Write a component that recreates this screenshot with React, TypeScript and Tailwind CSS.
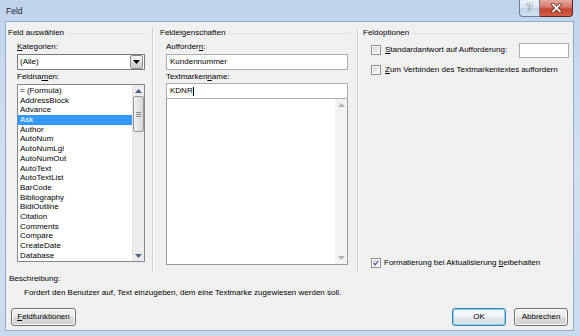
import React from 'react';

const fieldNames = [
  '= (Formula)', 'AddressBlock', 'Advance', 'Ask', 'Author', 'AutoNum', 'AutoNumLgl', 'AutoNumOut',
  'AutoText', 'AutoTextList', 'BarCode', 'Bibliography', 'BidiOutline', 'Citation', 'Comments',
  'Compare', 'CreateDate', 'Database',
];

const Arrow: React.FC<{ up?: boolean; color?: string }> = ({ up, color = '#4d6185' }) => (
  <svg width="7" height="4" viewBox="0 0 7 4">
    <path d={up ? 'M0 4 L3.5 0 L7 4 Z' : 'M0 0 L7 0 L3.5 4 Z'} fill={color} />
  </svg>
);

const Check: React.FC<{ checked?: boolean }> = ({ checked }) => (
  <div className="w-[10px] h-[10px] border border-[#8e8f8f] bg-white p-[1px] shrink-0">
    <div className="w-full h-full bg-gradient-to-br from-[#cfd2d8] to-[#f7f7f7] flex items-center justify-center">
      {checked && (
        <svg width="8" height="8" viewBox="0 0 8 8">
          <path d="M1 4.2 L3 6.5 L7 1" fill="none" stroke="#3a57a4" strokeWidth="1.6" />
        </svg>
      )}
    </div>
  </div>
);

const Button: React.FC<{ children: React.ReactNode; focused?: boolean; width: string }> = ({ children, focused, width }) => (
  <div
    className={`${width} h-[18px] rounded-[3px] border flex items-center justify-center ${
      focused
        ? 'border-[#3c7fb1] shadow-[inset_0_0_0_1px_#7fd3f7] bg-[linear-gradient(to_bottom,#f6f9fb_0%,#eef3f6_50%,#e2e8ec_51%,#d8dfe4_100%)]'
        : 'border-[#707070] shadow-[inset_0_0_0_1px_#fbfbfb] bg-[linear-gradient(to_bottom,#f2f2f2_0%,#ebebeb_50%,#dddddd_51%,#cfcfcf_100%)]'
    }`}
  >
    {children}
  </div>
);

const Heading: React.FC<{ children: React.ReactNode }> = ({ children }) => (
  <div className="flex items-center h-[10px] leading-[10px] gap-[3px]">
    <span>{children}</span>
    <div className="flex-1 h-px bg-[#dcdfe3]" />
  </div>
);

const Separator = () => (
  <div className="flex shrink-0 pt-[5px]">
    <div className="w-px bg-[#cdcdcd]" />
    <div className="w-px bg-white" />
  </div>
);

export default function App() {
  return (
    <div className="w-[580px] h-[336px] flex flex-col overflow-hidden bg-gradient-to-b from-[#bfd4ec] via-[#d2e1f2] to-[#c9dbef] font-['Liberation_Sans',Arial,sans-serif] text-[8px] text-black">
      {/* Title bar */}
      <div className="h-[21px] flex items-start shrink-0">
        <span className="ml-[6px] mt-[5px] text-[8.5px] leading-[12px] text-[#1e2a3a]">Feld</span>
        <div className="flex-1" />
        <div className="flex mr-[7px]">
          <div className="w-[21px] h-[17px] rounded-bl-[4px] border border-t-0 border-[#6d7f99] bg-[linear-gradient(to_bottom,#eef3fa_0%,#d9e4f1_50%,#c3d3e7_51%,#d2e0f0_100%)] flex items-center justify-center">
            <span className="text-white font-bold text-[10px] leading-[10px] [text-shadow:0_0_1px_#2e4466,0_0_1px_#2e4466]">?</span>
          </div>
          <div className="w-[33px] h-[17px] rounded-br-[4px] border border-l-0 border-t-0 border-[#5b2620] bg-[linear-gradient(to_bottom,#e9a99f_0%,#d97766_45%,#c8442f_55%,#d55f45_100%)] flex items-center justify-center">
            <svg width="11" height="10" viewBox="0 0 11 10">
              <path d="M2 1.5 L9 8.5 M9 1.5 L2 8.5" stroke="#4a1a14" strokeWidth="3.2" strokeLinecap="square" />
              <path d="M2 1.5 L9 8.5 M9 1.5 L2 8.5" stroke="#ffffff" strokeWidth="1.8" strokeLinecap="square" />
            </svg>
          </div>
        </div>
      </div>

      {/* Client area */}
      <div className="ml-[5px] mr-[6px] mb-[5px] flex-1 bg-[#f0f0f0] border border-[#97abc4] flex flex-col">
        <div className="h-[250px] flex">
          {/* Feld auswählen */}
          <div className="w-[146px] pl-[2px] pr-[6px] pt-[6px] flex flex-col">
            <Heading>Feld auswählen</Heading>
            <div className="pl-[9px] flex flex-col">
              <div className="mt-[4px] h-[10px] leading-[10px]"><u className="underline-offset-1">K</u>ategorien:</div>
              <div className="mt-[2px] w-[128px] h-[16px] border border-[#7a7a7a] bg-white flex items-center">
                <span className="pl-[2px] flex-1">(Alle)</span>
                <div className="w-[13px] h-[14px] mr-px border border-[#8a8a8a] rounded-[2px] bg-[linear-gradient(to_bottom,#f4f4f4_0%,#e6e6e6_50%,#d8d8d8_51%,#cdcdcd_100%)] flex items-center justify-center">
                  <Arrow color="#000" />
                </div>
              </div>
              <div className="mt-[2px] h-[10px] leading-[10px]">Feldna<u className="underline-offset-1">m</u>en:</div>
              <div className="mt-[2px] w-[128px] h-[178px] border border-[#828790] bg-white flex">
                <div className="flex-1 pt-px">
                  {fieldNames.map((n) => (
                    <div
                      key={n}
                      className={`h-[9.7px] leading-[9.7px] pl-[2px] ${n === 'Ask' ? 'bg-[#3399ff] text-white' : ''}`}
                    >
                      {n}
                    </div>
                  ))}
                </div>
                <div className="w-[12px] bg-[#ececec] border-l border-[#e3e3e3] flex flex-col items-center">
                  <div className="h-[11px] flex items-center"><Arrow up /></div>
                  <div className="w-[11px] h-[36px] rounded-[2px] border border-[#979797] bg-gradient-to-r from-[#f1f1f1] to-[#d6d6d6] flex flex-col items-center justify-center gap-px">
                    <div className="w-[5px] h-px bg-[#8a8a8a]" />
                    <div className="w-[5px] h-px bg-[#8a8a8a]" />
                    <div className="w-[5px] h-px bg-[#8a8a8a]" />
                  </div>
                  <div className="flex-1" />
                  <div className="h-[11px] flex items-center"><Arrow /></div>
                </div>
              </div>
            </div>
          </div>
          <Separator />

          {/* Feldeigenschaften */}
          <div className="w-[203px] pl-[6px] pr-[8px] pt-[6px] flex flex-col">
            <Heading>Feldeigenschaften</Heading>
            <div className="pl-[6px] flex flex-col">
              <div className="mt-[4px] h-[10px] leading-[10px]">Aufforder<u className="underline-offset-1">n</u>:</div>
              <div className="mt-[2px] w-[182px] h-[16px] border border-[#abadb3] bg-white flex items-center pl-[3px]">
                Kundennummer
              </div>
              <div className="mt-[2px] h-[10px] leading-[10px]">Textmarken<u className="underline-offset-1">n</u>ame:</div>
              <div className="mt-[1px] w-[182px] h-[16px] border border-[#abadb3] bg-white flex items-center pl-[3px]">
                KDNR<span className="w-px h-[9px] bg-black" />
              </div>
              <div className="w-[182px] h-[166px] border border-t-0 border-[#9a9a9a] bg-white flex justify-end">
                <div className="w-[12px] bg-[#f3f3f3] flex flex-col items-center">
                  <div className="h-[12px] flex items-center"><Arrow up color="#b5b5b5" /></div>
                  <div className="flex-1" />
                  <div className="h-[12px] flex items-center"><Arrow color="#b5b5b5" /></div>
                </div>
              </div>
            </div>
          </div>
          <Separator />

          {/* Feldoptionen */}
          <div className="flex-1 pl-[4px] pr-[4px] pt-[6px] pb-[4px] flex flex-col">
            <Heading>Feldoptionen</Heading>
            <div className="pl-[8px] flex flex-col flex-1">
              <div className="mt-[4px] h-[16px] flex items-center">
                <Check />
                <span className="ml-[4px]"><u className="underline-offset-1">S</u>tandardantwort auf Aufforderung:</span>
                <div className="flex-1" />
                <div className="w-[50px] h-[15px] border border-[#abadb3] bg-white" />
              </div>
              <div className="mt-[7px] h-[10px] flex items-center">
                <Check />
                <span className="ml-[4px]"><u className="underline-offset-1">Z</u>um Verbinden des Textmarkentextes auffordern</span>
              </div>
              <div className="flex-1" />
              <div className="h-[10px] flex items-center">
                <Check checked />
                <span className="ml-[3px]">Formatierung bei Aktualisierung <u className="underline-offset-1">b</u>eibehalten</span>
              </div>
            </div>
          </div>
        </div>

        {/* Beschreibung */}
        <div className="pt-[2px] pl-[3px] h-[12px] leading-[10px]">Beschreibung:</div>
        <div className="mt-[4px] pl-[18px] h-[10px] leading-[10px]">
          Fordert den Benutzer auf, Text einzugeben, dem eine Textmarke zugewiesen werden soll.
        </div>

        {/* Buttons */}
        <div className="mt-[10px] flex items-center px-[5px]">
          <Button width="w-[65px]">
            <span><u className="underline-offset-1">F</u>eldfunktionen</span>
          </Button>
          <div className="flex-1" />
          <div className="flex gap-[8px]">
            <Button width="w-[54px]" focused>OK</Button>
            <Button width="w-[54px]">Abbrechen</Button>
          </div>
        </div>
      </div>
    </div>
  );
}
